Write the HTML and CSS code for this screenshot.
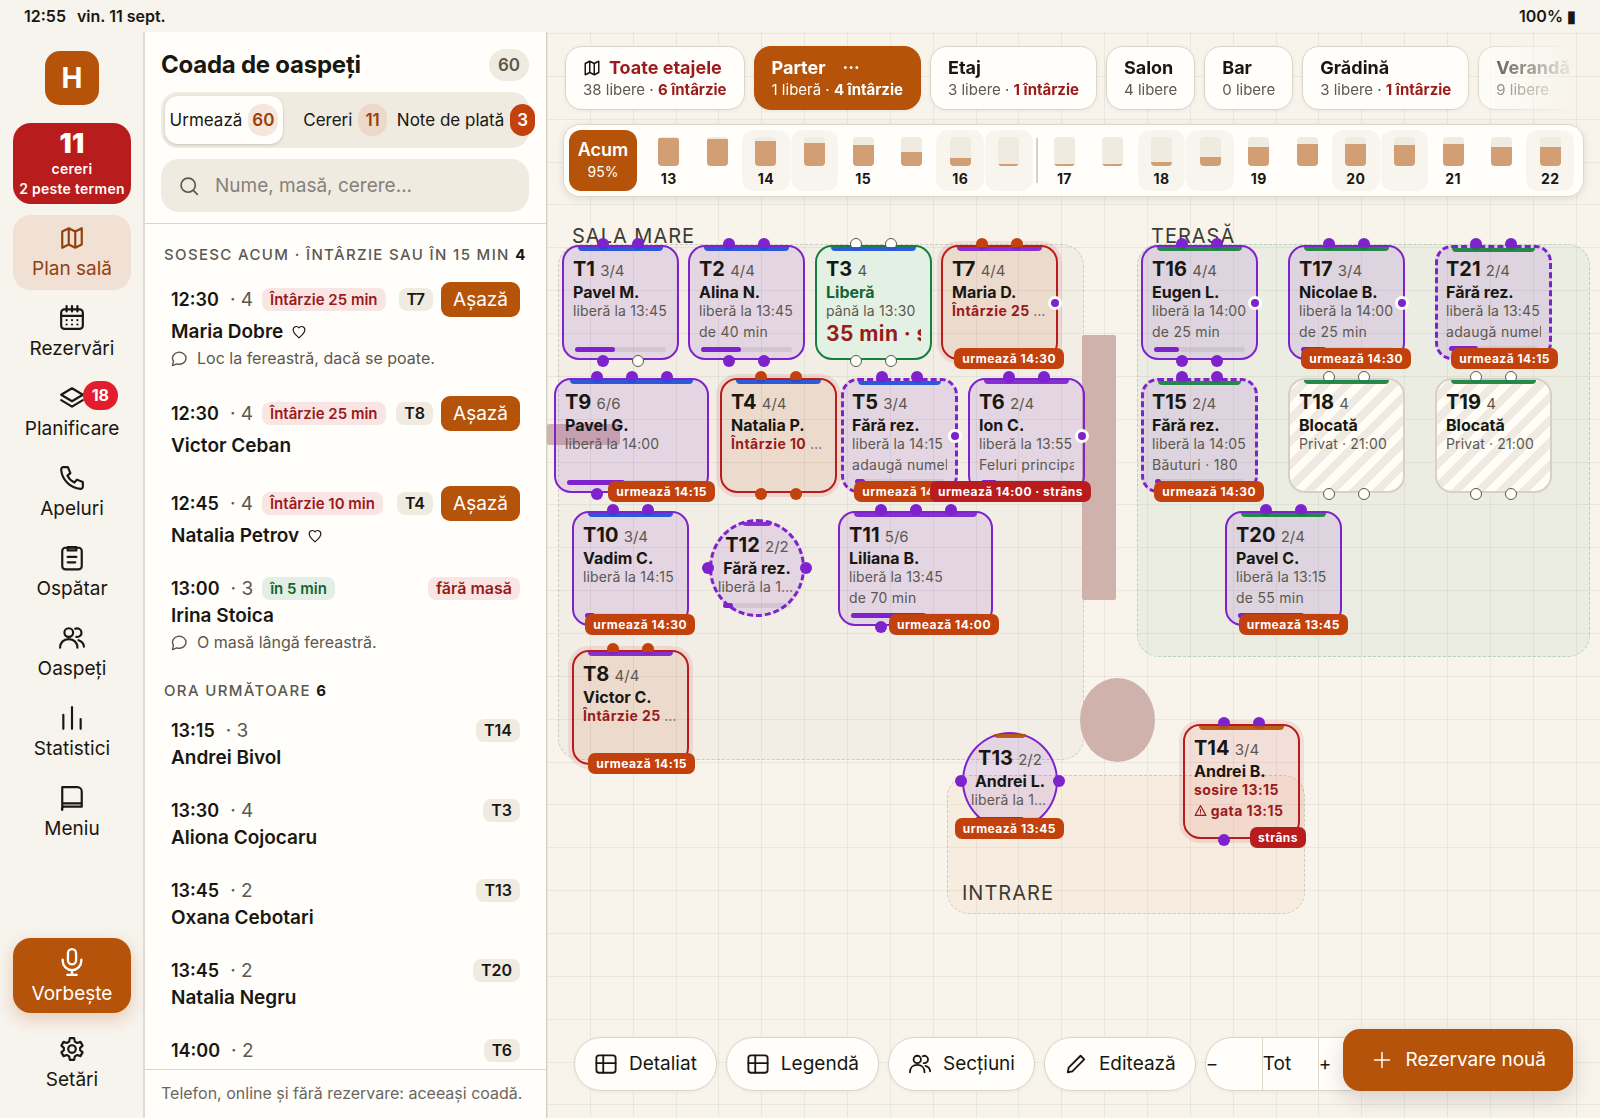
FILE: index.html
```html
<!DOCTYPE html>
<html lang="ro">
<head>
<meta charset="utf-8">
<meta name="viewport" content="width=device-width, initial-scale=1">
<title>Plan sală</title>
<link rel="stylesheet" href="styles.css">
</head>
<body>
<svg class="sprite" aria-hidden="true">
  <symbol id="i-map" viewBox="0 0 24 24"><path d="M3 6l6-3 6 3 6-3v15l-6 3-6-3-6 3zM9 3v15M15 6v15"/></symbol>
  <symbol id="i-calendar" viewBox="0 0 24 24"><rect x="2" y="4" width="20" height="18" rx="3"/><path d="M2 10h20M7 1v5M12 1v5M17 1v5M7 14h.01M12 14h.01M17 14h.01M7 18h.01M12 18h.01M17 18h.01"/></symbol>
  <symbol id="i-layers" viewBox="0 0 24 24"><path d="M12 3l10 6-10 6L2 9zM2 14l10 6 10-6"/></symbol>
  <symbol id="i-phone" viewBox="0 0 24 24"><path d="M5 2h3.200l2.300 5.500-2.700 2.300a13 13 0 0 0 6.400 6.400l2.300-2.700 5.500 2.300V20a2 2 0 0 1-2.200 2C10.500 21.500 2.500 13.500 2 4.200A2 2 0 0 1 4 2z"/></symbol>
  <symbol id="i-clipboard" viewBox="0 0 24 24"><rect x="3" y="2.500" width="18" height="20" rx="3"/><path d="M8 2h8v3H8zM8 11h8M8 16h7"/></symbol>
  <symbol id="i-users" viewBox="0 0 24 24"><circle cx="9" cy="7" r="4"/><path d="M1 21c0-5 3.500-8 8-8s8 3 8 8M15 3.500a4 4 0 1 1 1 7.500M18 14c3 1 5 3.500 5 6"/></symbol>
  <symbol id="i-stats" viewBox="0 0 24 24"><path d="M4 9v13M12 2v20M20 13v9"/></symbol>
  <symbol id="i-book" viewBox="0 0 24 24"><path d="M3 23V2h14a4 4 0 0 1 4 4v14H5a2 2 0 0 0-2 3zM3 17h18"/></symbol>
  <symbol id="i-mic" viewBox="0 0 24 24"><rect x="8.500" y="1" width="7" height="13" rx="3.500"/><path d="M4 10v1a8 8 0 0 0 16 0v-1M12 19v4M8 23h8"/></symbol>
  <symbol id="i-gear" viewBox="0 0 24 24"><circle cx="12" cy="12" r="3.500"/><path d="M10 2h4l.6 3.200 2.200 1.200 3-1 2 3.500-2.300 2.100v2l2.300 2.100-2 3.500-3-1-2.200 1.200L14 22h-4l-.6-3.200-2.200-1.200-3 1-2-3.500L4.500 13v-2L2.200 8.900l2-3.500 3 1 2.200-1.200z"/></symbol>
  <symbol id="i-search" viewBox="0 0 24 24"><circle cx="11" cy="11" r="8.500"/><path d="M17.500 17.500L22 22"/></symbol>
  <symbol id="i-heart" viewBox="0 0 24 24"><path d="M12 22C7 17.500 2 13.500 2 8.500A5.500 5.500 0 0 1 12 5a5.500 5.500 0 0 1 10 3.500c0 5-5 9-10 13.500z"/></symbol>
  <symbol id="i-chat" viewBox="0 0 24 24"><path d="M2 22l1.500-6A9.500 8.500 0 1 1 8 19.500z"/></symbol>
  <symbol id="i-warn" viewBox="0 0 24 24"><path d="M12 3L2 21h20zM12 10v5M12 18v.01"/></symbol>
  <symbol id="i-table" viewBox="0 0 24 24"><rect x="1.500" y="2.500" width="21" height="19" rx="3"/><path d="M1.500 11h21M9 2.500v19"/></symbol>
  <symbol id="i-pencil" viewBox="0 0 24 24"><path d="M3 21l1-5L17 3l4 4L8 20z"/></symbol>
  <symbol id="i-plus" viewBox="0 0 24 24"><path d="M12 2v20M2 12h20"/></symbol>
</svg>

<header class="status">
  <span class="status-time"><time>12:55</time><span>vin. 11 sept.</span></span>
  <span class="status-battery">100% ▮</span>
</header>

<div class="app">
  <nav class="rail" aria-label="Navigare">
    <div class="logo">H</div>
    <button class="alarm"><b>11</b><span>cereri</span><span>2 peste termen</span></button>
    <a class="nav is-active" href="#plan"><svg class="ico"><use href="#i-map"/></svg>Plan sală</a>
    <a class="nav" href="#rezervari"><svg class="ico"><use href="#i-calendar"/></svg>Rezervări</a>
    <a class="nav" href="#planificare"><svg class="ico"><use href="#i-layers"/></svg>Planificare<span class="nav-badge">18</span></a>
    <a class="nav" href="#apeluri"><svg class="ico"><use href="#i-phone"/></svg>Apeluri</a>
    <a class="nav" href="#ospatar"><svg class="ico"><use href="#i-clipboard"/></svg>Ospătar</a>
    <a class="nav" href="#oaspeti"><svg class="ico"><use href="#i-users"/></svg>Oaspeți</a>
    <a class="nav" href="#statistici"><svg class="ico"><use href="#i-stats"/></svg>Statistici</a>
    <a class="nav" href="#meniu"><svg class="ico"><use href="#i-book"/></svg>Meniu</a>
    <button class="nav voice"><svg class="ico"><use href="#i-mic"/></svg>Vorbește</button>
    <a class="nav settings" href="#setari"><svg class="ico"><use href="#i-gear"/></svg>Setări</a>
  </nav>

  <aside class="queue">
    <div class="queue-head">
      <div class="queue-title"><h1>Coada de oaspeți</h1><span class="total">60</span></div>
      <div class="segments">
        <button class="segment is-on">Urmează<span class="count">60</span></button>
        <button class="segment">Cereri<span class="count count-mid">11</span></button>
        <button class="segment">Note de plată<span class="count count-hot">3</span></button>
      </div>
      <label class="search"><svg class="ico"><use href="#i-search"/></svg><input type="search" placeholder="Nume, masă, cerere..." aria-label="Caută"></label>
    </div>
    <div class="queue-list">
      <h2>SOSESC ACUM · ÎNTÂRZIE SAU ÎN 15 MIN <b>4</b></h2>
      <article class="guest">
        <div class="guest-top"><time>12:30</time><span class="party">· 4</span><span class="chip chip-late">Întârzie 25 min</span><span class="chip chip-table">T7</span><button class="seat">Așază</button></div>
        <h3>Maria Dobre<svg class="ico"><use href="#i-heart"/></svg></h3>
        <p><svg class="ico"><use href="#i-chat"/></svg>Loc la fereastră, dacă se poate.</p>
      </article>
      <article class="guest">
        <div class="guest-top"><time>12:30</time><span class="party">· 4</span><span class="chip chip-late">Întârzie 25 min</span><span class="chip chip-table">T8</span><button class="seat">Așază</button></div>
        <h3>Victor Ceban</h3>
      </article>
      <article class="guest">
        <div class="guest-top"><time>12:45</time><span class="party">· 4</span><span class="chip chip-late">Întârzie 10 min</span><span class="chip chip-table">T4</span><button class="seat">Așază</button></div>
        <h3>Natalia Petrov<svg class="ico"><use href="#i-heart"/></svg></h3>
      </article>
      <article class="guest">
        <div class="guest-top"><time>13:00</time><span class="party">· 3</span><span class="chip chip-soon">în 5 min</span><span class="chip chip-none">fără masă</span></div>
        <h3>Irina Stoica</h3>
        <p><svg class="ico"><use href="#i-chat"/></svg>O masă lângă fereastră.</p>
      </article>
      <h2>ORA URMĂTOARE <b>6</b></h2>
      <article class="guest"><div class="guest-top"><time>13:15</time><span class="party">· 3</span><span class="chip chip-table">T14</span></div><h3>Andrei Bivol</h3></article>
      <article class="guest"><div class="guest-top"><time>13:30</time><span class="party">· 4</span><span class="chip chip-table">T3</span></div><h3>Aliona Cojocaru</h3></article>
      <article class="guest"><div class="guest-top"><time>13:45</time><span class="party">· 2</span><span class="chip chip-table">T13</span></div><h3>Oxana Cebotari</h3></article>
      <article class="guest"><div class="guest-top"><time>13:45</time><span class="party">· 2</span><span class="chip chip-table">T20</span></div><h3>Natalia Negru</h3></article>
      <article class="guest"><div class="guest-top"><time>14:00</time><span class="party">· 2</span><span class="chip chip-table">T6</span></div></article>
    </div>
    <footer class="queue-foot">Telefon, online și fără rezervare: aceeași coadă.</footer>
  </aside>

  <main class="map">
    <div class="plan">
      <div class="zone" style="left:11px;top:212px;width:526px;height:516px"></div>
      <div class="zone zone-green" style="left:590px;top:212px;width:453px;height:413px"></div>
      <div class="zone zone-warm" style="left:400px;top:743px;width:358px;height:139px"></div>
      <span class="zone-name" style="left:25px;top:192px">SALA MARE</span>
      <span class="zone-name" style="left:604px;top:192px">TERASĂ</span>
      <span class="zone-name" style="left:415px;top:849px">INTRARE</span>
      <div class="block" style="left:0;top:392px;width:73px;height:21px"></div>
      <div class="block" style="left:535px;top:303px;width:34px;height:265px"></div>
      <div class="block block-oval" style="left:533px;top:646px;width:75px;height:84px"></div>

      <div class="table" style="left:15px;top:213px">
        <span class="chairs"><i></i><i></i></span>
        <button class="card"><span class="bar blue"></span><span class="id"><b>T1</b> 3/4</span><span class="who">Pavel M.</span><span class="when">liberă la 13:45</span><span class="meter"><span style="width:44%"></span></span></button>
        <span class="chairs chairs-end"><i></i><i class="empty"></i></span>
      </div>
      <div class="table" style="left:141px;top:213px">
        <span class="chairs"><i></i><i></i></span>
        <button class="card"><span class="bar blue"></span><span class="id"><b>T2</b> 4/4</span><span class="who">Alina N.</span><span class="when">liberă la 13:45</span><span class="more">de 40 min</span><span class="meter"><span style="width:44%"></span></span></button>
        <span class="chairs chairs-end"><i></i><i></i></span>
      </div>
      <div class="table free" style="left:268px;top:213px">
        <span class="chairs"><i class="empty"></i><i class="empty"></i></span>
        <button class="card"><span class="bar blue"></span><span class="id"><b>T3</b> 4</span><span class="who">Liberă</span><span class="when">până la 13:30</span><span class="more more-big">35 min · strâns</span></button>
        <span class="chairs chairs-end"><i class="empty"></i><i class="empty"></i></span>
      </div>
      <div class="table late" style="left:394px;top:213px">
        <span class="chairs"><i></i><i></i></span>
        <button class="card"><span class="bar violet"></span><span class="id"><b>T7</b> 4/4</span><span class="who">Maria D.</span><span class="when"><b>Întârzie 25 min</b></span></button>
        <span class="link"></span><span class="next">urmează 14:30</span>
      </div>

      <div class="table wide" style="left:7px;top:346px">
        <span class="chairs"><i></i><i></i><i></i></span>
        <button class="card"><span class="bar blue"></span><span class="id"><b>T9</b> 6/6</span><span class="who">Pavel G.</span><span class="when">liberă la 14:00</span><span class="meter"><span style="width:45%"></span></span></button>
        <span class="chairs chairs-end"><i></i><i></i><i></i></span>
        <span class="next">urmează 14:15</span>
      </div>
      <div class="table late" style="left:173px;top:346px">
        <span class="chairs"><i></i><i></i></span>
        <button class="card"><span class="bar blue"></span><span class="id"><b>T4</b> 4/4</span><span class="who">Natalia P.</span><span class="when"><b>Întârzie 10 min</b></span></button>
        <span class="chairs chairs-end"><i></i><i></i></span>
      </div>
      <div class="table walkin" style="left:294px;top:346px">
        <span class="chairs"><i></i><i></i></span>
        <button class="card"><span class="bar blue"></span><span class="id"><b>T5</b> 3/4</span><span class="who">Fără rez.</span><span class="when">liberă la 14:15</span><span class="more">adaugă numele</span><span class="meter"><span style="width:11%"></span></span></button>
        <span class="link"></span><span class="next">urmează 14:30</span>
      </div>
      <div class="table" style="left:421px;top:346px">
        <span class="chairs"><i></i><i></i></span>
        <button class="card"><span class="bar violet"></span><span class="id"><b>T6</b> 2/4</span><span class="who">Ion C.</span><span class="when">liberă la 13:55</span><span class="more">Feluri principale</span><span class="meter"><span style="width:18%"></span></span></button>
        <span class="link"></span><span class="next tight">urmează 14:00 · strâns</span>
      </div>

      <div class="table" style="left:25px;top:479px">
        <span class="chairs"><i></i><i></i></span>
        <button class="card"><span class="bar blue"></span><span class="id"><b>T10</b> 3/4</span><span class="who">Vadim C.</span><span class="when">liberă la 14:15</span><span class="meter"><span style="width:11%"></span></span></button>
        <span class="next">urmează 14:30</span>
      </div>
      <div class="table round walkin" style="left:162px;top:487px">
        <button class="card"><span class="bar violet"></span><span class="id"><b>T12</b> 2/2</span><span class="who">Fără rez.</span><span class="when">liberă la 14:15</span><span class="meter"><span style="width:14%"></span></span></button>
        <span class="chairs chairs-side"><i></i><i></i></span>
      </div>
      <div class="table wide" style="left:291px;top:479px">
        <span class="chairs"><i></i><i></i><i></i></span>
        <button class="card"><span class="bar violet"></span><span class="id"><b>T11</b> 5/6</span><span class="who">Liliana B.</span><span class="when">liberă la 13:45</span><span class="more">de 70 min</span><span class="meter"><span style="width:58%"></span></span></button>
        <span class="chairs chairs-end"><i></i><i></i><i></i></span>
        <span class="next">urmează 14:00</span>
      </div>
      <div class="table late" style="left:25px;top:618px">
        <span class="chairs"><i></i><i></i></span>
        <button class="card"><span class="bar violet"></span><span class="id"><b>T8</b> 4/4</span><span class="who">Victor C.</span><span class="when"><b>Întârzie 25 min</b></span></button>
        <span class="next">urmează 14:15</span>
      </div>
      <div class="table round" style="left:415px;top:700px">
        <button class="card"><span class="bar amber"></span><span class="id"><b>T13</b> 2/2</span><span class="who">Andrei L.</span><span class="when">liberă la 13:30</span><span class="meter"><span style="width:70%"></span></span></button>
        <span class="chairs chairs-side"><i></i><i></i></span>
        <span class="next">urmează 13:45</span>
      </div>
      <div class="table arriving" style="left:636px;top:692px">
        <span class="chairs"><i></i><i></i></span>
        <button class="card"><span class="bar amber"></span><span class="id"><b>T14</b> 3/4</span><span class="who">Andrei B.</span><span class="when"><b>sosire 13:15</b></span><span class="more"><b><svg class="ico"><use href="#i-warn"/></svg> gata 13:15</b></span></button>
        <span class="chairs chairs-end"><i></i><i></i></span>
        <span class="next tight">strâns</span>
      </div>

      <div class="table" style="left:594px;top:213px">
        <span class="chairs"><i></i><i></i></span>
        <button class="card"><span class="bar green"></span><span class="id"><b>T16</b> 4/4</span><span class="who">Eugen L.</span><span class="when">liberă la 14:00</span><span class="more">de 25 min</span><span class="meter"><span style="width:28%"></span></span></button>
        <span class="chairs chairs-end"><i></i><i></i></span><span class="link"></span>
      </div>
      <div class="table" style="left:741px;top:213px">
        <span class="chairs"><i></i><i></i></span>
        <button class="card"><span class="bar green"></span><span class="id"><b>T17</b> 3/4</span><span class="who">Nicolae B.</span><span class="when">liberă la 14:00</span><span class="more">de 25 min</span><span class="meter"><span style="width:28%"></span></span></button>
        <span class="link"></span><span class="next">urmează 14:30</span>
      </div>
      <div class="table walkin" style="left:888px;top:213px">
        <span class="chairs"><i></i><i></i></span>
        <button class="card"><span class="bar green"></span><span class="id"><b>T21</b> 2/4</span><span class="who">Fără rez.</span><span class="when">liberă la 13:45</span><span class="more">adaugă numele</span><span class="meter"><span style="width:33%"></span></span></button>
        <span class="next">urmează 14:15</span>
      </div>
      <div class="table walkin" style="left:594px;top:346px">
        <span class="chairs"><i></i><i></i></span>
        <button class="card"><span class="bar green"></span><span class="id"><b>T15</b> 2/4</span><span class="who">Fără rez.</span><span class="when">liberă la 14:05</span><span class="more">Băuturi · 180</span><span class="meter"><span style="width:7%"></span></span></button>
        <span class="next">urmează 14:30</span>
      </div>
      <div class="table blocked" style="left:741px;top:346px">
        <span class="chairs"><i class="empty"></i><i class="empty"></i></span>
        <button class="card"><span class="bar green"></span><span class="id"><b>T18</b> 4</span><span class="who">Blocată</span><span class="when">Privat · 21:00</span></button>
        <span class="chairs chairs-end"><i class="empty"></i><i class="empty"></i></span>
      </div>
      <div class="table blocked" style="left:888px;top:346px">
        <span class="chairs"><i class="empty"></i><i class="empty"></i></span>
        <button class="card"><span class="bar green"></span><span class="id"><b>T19</b> 4</span><span class="who">Blocată</span><span class="when">Privat · 21:00</span></button>
        <span class="chairs chairs-end"><i class="empty"></i><i class="empty"></i></span>
      </div>
      <div class="table" style="left:678px;top:479px">
        <span class="chairs"><i></i><i></i></span>
        <button class="card"><span class="bar green"></span><span class="id"><b>T20</b> 2/4</span><span class="who">Pavel C.</span><span class="when">liberă la 13:15</span><span class="more">de 55 min</span><span class="meter"><span style="width:73%"></span></span></button>
        <span class="next">urmează 13:45</span>
      </div>
    </div>

    <div class="floors">
      <button class="floor floor-all"><span class="floor-name"><svg class="ico"><use href="#i-map"/></svg>Toate etajele</span><span>38 libere · <b>6 întârzie</b></span></button>
      <button class="floor is-on"><span class="floor-name">Parter<i class="dots">···</i></span><span>1 liberă · <b>4 întârzie</b></span></button>
      <button class="floor"><span class="floor-name">Etaj</span><span>3 libere · <b>1 întârzie</b></span></button>
      <button class="floor"><span class="floor-name">Salon</span><span>4 libere</span></button>
      <button class="floor"><span class="floor-name">Bar</span><span>0 libere</span></button>
      <button class="floor"><span class="floor-name">Grădină</span><span>3 libere · <b>1 întârzie</b></span></button>
      <button class="floor floor-last"><span class="floor-name">Verandă</span><span>9 libere</span></button>
    </div>

    <div class="timeline">
      <button class="now"><b>Acum</b><span>95%</span></button>
      <button class="slot"><span class="fill"><span style="height:97%"></span></span>13</button>
      <button class="slot"><span class="fill"><span style="height:93%"></span></span></button>
      <button class="slot alt"><span class="fill"><span style="height:86%"></span></span>14</button>
      <button class="slot alt"><span class="fill"><span style="height:78%"></span></span></button>
      <button class="slot"><span class="fill"><span style="height:72%"></span></span>15</button>
      <button class="slot"><span class="fill"><span style="height:48%"></span></span></button>
      <button class="slot alt"><span class="fill"><span style="height:28%"></span></span>16</button>
      <button class="slot alt"><span class="fill"><span style="height:8%"></span></span></button>
      <span class="split"></span>
      <button class="slot"><span class="fill"><span style="height:8%"></span></span>17</button>
      <button class="slot"><span class="fill"><span style="height:8%"></span></span></button>
      <button class="slot alt"><span class="fill"><span style="height:13%"></span></span>18</button>
      <button class="slot alt"><span class="fill"><span style="height:31%"></span></span></button>
      <button class="slot"><span class="fill"><span style="height:64%"></span></span>19</button>
      <button class="slot"><span class="fill"><span style="height:77%"></span></span></button>
      <button class="slot alt"><span class="fill"><span style="height:77%"></span></span>20</button>
      <button class="slot alt"><span class="fill"><span style="height:72%"></span></span></button>
      <button class="slot"><span class="fill"><span style="height:77%"></span></span>21</button>
      <button class="slot"><span class="fill"><span style="height:64%"></span></span></button>
      <button class="slot alt"><span class="fill"><span style="height:64%"></span></span>22</button>
    </div>

    <div class="tools">
      <button class="tool"><svg class="ico"><use href="#i-table"/></svg>Detaliat</button>
      <button class="tool"><svg class="ico"><use href="#i-table"/></svg>Legendă</button>
      <button class="tool"><svg class="ico"><use href="#i-users"/></svg>Secțiuni</button>
      <button class="tool"><svg class="ico"><use href="#i-pencil"/></svg>Editează</button>
      <div class="zoom"><button>−</button><button>Tot</button><button>+</button></div>
    </div>
    <button class="create"><svg class="ico"><use href="#i-plus"/></svg>Rezervare nouă</button>
  </main>
</div>
</body>
</html>
```

FILE: styles.css
```css
:root {
  --ink: #191711;
  --muted: #5c5850;
  --brand: #b45309;
  --violet: #7e22ce;
  --red: #b91c1c;
  --red-ink: #991b1b;
  --orange: #c2410c;
  --paper: #fffefa;
  --sand: #f7f3ed;
  --stone: #efebe1;
  --line: #d9d5c8;
}

* { box-sizing: border-box; }

body {
  margin: 0;
  height: 100vh;
  display: flex;
  flex-direction: column;
  overflow: hidden;
  background: var(--sand);
  color: var(--ink);
  font: 16px/20px Inter, "Liberation Sans", sans-serif;
}

button, input { font: inherit; color: inherit; border: 0; padding: 0; margin: 0; background: none; }
button { cursor: pointer; }
a { color: inherit; text-decoration: none; }
h1, h2, h3, p { margin: 0; }
i { font-style: normal; }

.sprite { display: none; }
.ico {
  flex: none;
  fill: none;
  stroke: currentColor;
  stroke-width: 2;
  stroke-linecap: round;
  stroke-linejoin: round;
}

/* status bar */
.status {
  flex: none;
  height: 32px;
  padding: 0 24px;
  display: flex;
  align-items: center;
  justify-content: space-between;
  font-weight: 600;
}
.status-time { display: flex; gap: 11px; }

.app {
  flex: 1;
  min-height: 0;
  display: grid;
  grid-template-columns: 145px 402px minmax(0, 1fr);
}

/* left rail */
.rail {
  display: flex;
  flex-direction: column;
  align-items: center;
  gap: 5px;
  padding: 19px 12px 17px 13px;
  border-right: 2px solid #e0dcd1;
}
.logo {
  display: grid;
  place-items: center;
  width: 54px;
  height: 54px;
  margin-bottom: 13px;
  border-radius: 15px;
  background: var(--brand);
  color: #fff;
  font-size: 28px;
  font-weight: 700;
}
.alarm {
  display: flex;
  flex-direction: column;
  align-items: center;
  align-self: stretch;
  height: 81px;
  margin-bottom: 6px;
  padding-top: 5px;
  border-radius: 18px;
  background: var(--red);
  color: #fff;
  font-size: 14px;
  font-weight: 600;
  letter-spacing: .02em;
  white-space: nowrap;
}
.alarm b { font-size: 27px; line-height: 31px; }
.nav {
  position: relative;
  display: flex;
  flex-direction: column;
  align-items: center;
  align-self: stretch;
  flex: none;
  height: 75px;
  padding-top: 10px;
  gap: 6px;
  border-radius: 18px;
  font-size: 19px;
  line-height: 24px;
}
.nav .ico { width: 26px; height: 26px; }
.nav.is-active { background: #f1e1d4; color: #92400e; }
.nav-badge {
  position: absolute;
  top: 6px;
  right: 13px;
  padding: 0 9px;
  border-radius: 15px;
  background: #e11d2e;
  color: #fff;
  font-size: 16px;
  line-height: 29px;
  font-weight: 700;
}
.voice {
  margin-top: auto;
  margin-bottom: 8px;
  background: var(--brand);
  color: #fff;
  box-shadow: 0 6px 16px rgba(180, 83, 9, .25);
}
.voice .ico { width: 28px; height: 28px; }

/* guest queue */
.queue {
  display: flex;
  flex-direction: column;
  min-height: 0;
  background: var(--paper);
  border-right: 1px solid #d3cec2;
}
.queue-head {
  display: flex;
  flex-direction: column;
  gap: 11px;
  padding: 17px 17px 11px 16px;
  border-bottom: 1px solid var(--line);
}
.queue-title { display: flex; align-items: center; justify-content: space-between; }
h1 { font-size: 24px; line-height: 32px; font-weight: 700; letter-spacing: -.01em; }
.total {
  padding: 0 9px;
  border-radius: 16px;
  background: var(--stone);
  color: var(--muted);
  font-size: 17px;
  line-height: 32px;
  font-weight: 600;
}
.segments {
  display: grid;
  grid-template-columns: repeat(3, minmax(0, 1fr));
  gap: 3px;
  height: 56px;
  padding: 4px;
  border-radius: 17px;
  background: var(--stone);
}
.segment {
  display: flex;
  align-items: center;
  justify-content: center;
  gap: 6px;
  border-radius: 13px;
  font-size: 17px;
  white-space: nowrap;
}
.segment.is-on { background: var(--paper); box-shadow: 0 1px 3px rgba(0, 0, 0, .18); }
.count {
  padding: 0 4px;
  border-radius: 14px;
  background: #f5e7dc;
  color: #9a3f0c;
  font-size: 17px;
  line-height: 32px;
  font-weight: 600;
}
.count-mid { padding: 0 7px; background: #ecd9ca; }
.count-hot { padding: 0 7px; background: var(--orange); color: #fff; }
.search {
  display: flex;
  align-items: center;
  gap: 16px;
  height: 53px;
  padding: 0 18px;
  border-radius: 18px;
  background: var(--stone);
  color: var(--muted);
}
.search .ico { width: 20px; height: 20px; }
.search input { flex: 1; min-width: 0; font-size: 19px; outline: 0; }
.search input::placeholder { color: #85817a; opacity: 1; }

.queue-list { flex: 1; min-height: 0; overflow: hidden; padding: 6px 26px 0; }
h2 {
  margin: 0 -16px 0 -7px;
  padding: 15px 0 3px;
  color: var(--muted);
  font-size: 15px;
  line-height: 20px;
  font-weight: 500;
  letter-spacing: .09em;
  white-space: nowrap;
}
h2 b { color: var(--ink); font-weight: 700; }
.guest { padding: 14px 0 12px; }
.guest-top { display: flex; align-items: center; min-height: 25px; font-size: 19px; line-height: 25px; }
.guest-top time { font-size: 18px; font-weight: 600; }
.party { margin: 0 9px 0 11px; color: var(--muted); white-space: nowrap; }
.chip {
  padding: 0 8px;
  border-radius: 8px;
  font-size: 15px;
  line-height: 23px;
  font-weight: 600;
  white-space: nowrap;
}
.chip-late, .chip-none { background: #f9e6e4; color: var(--red-ink); }
.chip-none { margin-left: auto; font-size: 16px; }
.chip-soon { background: #e3efe4; color: #166534; }
.chip-table { margin-left: auto; background: var(--stone); font-size: 16px; }
.seat {
  height: 35px;
  margin-left: 8px;
  padding: 0 12px;
  border-radius: 9px;
  background: var(--brand);
  color: #fff;
  font-size: 19px;
}
h3 { display: flex; align-items: center; gap: 9px; font-size: 19px; line-height: 29px; font-weight: 600; }
h3 .ico { width: 14px; height: 14px; }
.guest p { display: flex; align-items: center; gap: 9px; color: var(--muted); line-height: 24px; white-space: nowrap; }
.guest p .ico { width: 17px; height: 17px; }
.queue-foot {
  padding: 13px 16px 14px;
  border-top: 1px solid var(--line);
  color: #6b675f;
  font-size: 16px;
  line-height: 21px;
  white-space: nowrap;
}

/* floor plan */
.map {
  position: relative;
  display: flex;
  flex-direction: column;
  min-width: 0;
  min-height: 0;
  overflow: hidden;
}
.plan {
  position: absolute;
  inset: 0;
  background-color: #f8f4ec;
  background-image:
    repeating-linear-gradient(90deg, rgba(60, 60, 40, .07) 0 1px, transparent 1px calc(100% / 7)),
    repeating-linear-gradient(180deg, rgba(60, 60, 40, .07) 0 1px, transparent 1px calc(100% / 7));
  background-size: 300px 300px;
  background-position: 0 1px;
}
.zone {
  position: absolute;
  border: 1px dashed rgba(80, 80, 60, .22);
  border-radius: 22px;
  background: rgba(90, 100, 70, .04);
}
.zone-green { border-color: rgba(21, 128, 61, .25); background: rgba(21, 128, 61, .055); }
.zone-warm { background: rgba(217, 119, 6, .05); }
.zone-name {
  position: absolute;
  font-size: 20px;
  line-height: 24px;
  letter-spacing: 1px;
  color: #3d3b33;
}
.block { position: absolute; border-radius: 2px; background: #cfb2ac; }
.block-oval { border-radius: 50%; }

.table {
  --tone: var(--violet);
  --seat: var(--violet);
  --tint: rgba(126, 34, 206, .12);
  position: absolute;
  isolation: isolate;
  width: 117px;
  height: 115px;
}
.table.wide { width: 155px; }
.table.round { width: 96px; height: 98px; }
.table.free { --tone: #15803d; --tint: #e3f1e5; }
.table.late { --tone: var(--red); --seat: var(--orange); --tint: rgba(194, 65, 12, .11); }
.table.arriving { --tone: var(--red); --tint: rgba(220, 38, 38, .1); }
.table.blocked { --tone: #d8cfc6; --tint: transparent; }

.card {
  position: relative;
  display: flex;
  flex-direction: column;
  width: 100%;
  height: 100%;
  padding: 10px 9px 0;
  border: 2px solid var(--tone);
  border-radius: 17px;
  background: var(--tint);
  text-align: left;
}
.walkin .card { padding: 9px 8px 0; border-width: 3px; border-style: dashed; }
.late .card, .arriving .card { box-shadow: 0 0 0 4px rgba(185, 28, 28, .1); }
.blocked .card { background: repeating-linear-gradient(135deg, #fffdf6 0 8px, #efebe2 8px 16px); }
.round .card { padding: 12px 7px 0; border-radius: 50%; text-align: center; }
.round.walkin .card { padding: 11px 6px 0; }
.bar {
  position: absolute;
  z-index: 2;
  top: 0;
  left: 14px;
  right: 14px;
  height: 4px;
  border-radius: 0 0 4px 4px;
  opacity: .92;
}
.round .bar { left: 30px; right: 30px; }
.blue { background: #1d4ed8; }
.violet { background: #7e22ce; }
.green { background: #15803d; }
.amber { background: #b45309; }
.id, .who, .when, .more { flex: none; white-space: nowrap; overflow: hidden; }
.id { font-size: 15px; line-height: 24px; color: var(--muted); }
.id b { margin-right: 1px; font-size: 20px; color: var(--ink); }
.who { font-size: 16px; line-height: 19px; font-weight: 700; }
.free .who { color: #166534; }
.when { font-size: 14px; line-height: 17px; letter-spacing: .01em; color: var(--muted); text-overflow: ellipsis; }
.when b, .more b { color: var(--red-ink); font-weight: 700; letter-spacing: .03em; }
.more { margin-top: 5px; font-size: 14px; line-height: 16px; letter-spacing: .02em; color: var(--muted); }
.more .ico { width: 13px; height: 13px; vertical-align: -1px; }
.more-big { margin-top: 3px; font-size: 21px; line-height: 24px; font-weight: 700; color: var(--red-ink); }
.meter {
  position: absolute;
  left: 11px;
  right: 11px;
  bottom: 6px;
  height: 5px;
  border-radius: 3px;
  background: rgba(60, 50, 60, .09);
}
.meter span { display: block; height: 5px; border-radius: 3px; background: var(--violet); }

.chairs {
  position: absolute;
  z-index: 1;
  top: -7px;
  left: 0;
  right: 0;
  display: flex;
  justify-content: center;
  gap: 23px;
}
.chairs i { width: 12px; height: 12px; border-radius: 50%; background: var(--seat); }
.chairs i.empty { background: #fffefa; border: 1px solid #5c5850; }
.chairs-end { top: auto; bottom: -7px; }
.chairs-side { top: 43px; left: -7px; right: -7px; justify-content: space-between; }
.link {
  position: absolute;
  z-index: 2;
  top: 51px;
  right: -4px;
  width: 14px;
  height: 14px;
  border: 3px solid #fffefa;
  border-radius: 50%;
  background: var(--violet);
}
.next {
  position: absolute;
  z-index: 3;
  right: -6px;
  bottom: -9px;
  padding: 0 8px;
  border-radius: 7px;
  background: var(--orange);
  color: #fff;
  font-size: 12px;
  line-height: 21px;
  font-weight: 700;
  letter-spacing: .04em;
  white-space: nowrap;
}
.next.tight { background: var(--red); }

/* floor tabs */
.floors {
  position: relative;
  display: flex;
  flex: none;
  gap: 9px;
  margin: 0 16px;
  padding: 14px 0 14px 2px;
  overflow: hidden;
  mask-image: linear-gradient(90deg, #000 calc(100% - 130px), transparent calc(100% - 6px));
}
.floor {
  display: flex;
  flex-direction: column;
  flex: none;
  height: 64px;
  padding: 9px 17px 0;
  border: 1px solid var(--line);
  border-radius: 17px;
  background: var(--paper);
  color: var(--muted);
  font-size: 15px;
  text-align: left;
  white-space: nowrap;
  box-shadow: 0 1px 4px rgba(0, 0, 0, .06);
}
.floor b { color: var(--red-ink); font-weight: 700; }
.floor-name { display: flex; align-items: center; gap: 8px; font-size: 18px; line-height: 24px; font-weight: 700; color: var(--ink); }
.floor-name .ico { width: 18px; height: 18px; color: var(--ink); }
.floor-all .floor-name { color: var(--red-ink); }
.floor.is-on { background: var(--brand); border-color: var(--brand); color: #fff; }
.floor.is-on .floor-name, .floor.is-on b { color: #fff; }
.floor-last { min-width: 150px; }
.dots { margin-left: 9px; font-weight: 600; }

/* occupancy timeline */
.timeline {
  position: relative;
  display: flex;
  flex: none;
  gap: 1px;
  height: 73px;
  margin: 0 16px;
  padding: 5px 9px 5px 5px;
  border: 1px solid #dcd8cb;
  border-radius: 17px;
  background: var(--paper);
  box-shadow: 0 2px 8px rgba(0, 0, 0, .1);
}
.now {
  display: flex;
  flex-direction: column;
  align-items: center;
  justify-content: center;
  gap: 2px;
  width: 68px;
  margin-right: 7px;
  border-radius: 12px;
  background: var(--brand);
  color: #fff;
  font-size: 14px;
}
.now b { font-size: 18px; font-weight: 600; }
.slot {
  display: flex;
  flex: 1;
  flex-direction: column;
  align-items: center;
  gap: 3px;
  padding-top: 7px;
  border-radius: 12px;
  font-size: 14px;
  font-weight: 700;
  letter-spacing: .03em;
}
.slot.alt { background: #f8f5ef; }
.fill {
  display: flex;
  align-items: flex-end;
  width: 21px;
  height: 29px;
  border-radius: 4px;
  background: var(--stone);
  overflow: hidden;
}
.fill span { width: 100%; background: #d29f75; }
.split { width: 2px; margin: 8px 2px; background: #d8d2c5; }

/* bottom controls */
.tools { position: relative; display: flex; gap: 9px; margin-top: auto; padding: 0 27px 27px; }
.tool, .zoom {
  display: flex;
  flex: none;
  align-items: center;
  height: 54px;
  border: 1px solid var(--line);
  border-radius: 27px;
  background: var(--paper);
  box-shadow: 0 1px 4px rgba(0, 0, 0, .05);
  font-size: 19px;
}
.tool { gap: 12px; padding: 0 19px 0 20px; }
.tool .ico { width: 22px; height: 22px; }
.zoom { overflow: hidden; }
.zoom button { width: 56px; height: 100%; text-align: left; }
.zoom button + button { border-left: 1px solid var(--line); }
.create {
  position: absolute;
  right: 27px;
  bottom: 27px;
  display: flex;
  align-items: center;
  gap: 14px;
  height: 62px;
  padding: 0 27px 0 30px;
  border-radius: 17px;
  background: var(--brand);
  color: #fff;
  font-size: 19px;
  white-space: nowrap;
  box-shadow: 0 8px 24px rgba(0, 0, 0, .15);
}
.create .ico { width: 18px; height: 18px; }
```
